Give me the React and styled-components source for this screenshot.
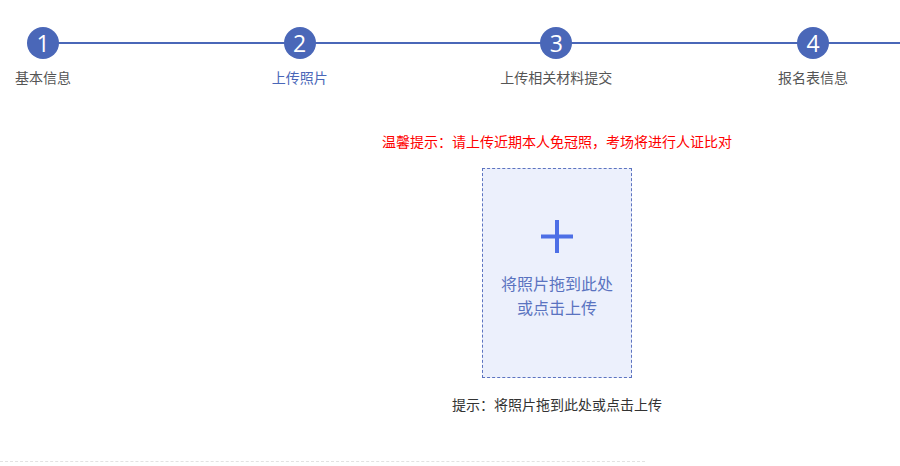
import React from "react";
import styled, { createGlobalStyle } from "styled-components";

const Global = createGlobalStyle`
  html, body { margin: 0; padding: 0; background: #fff; }
  body { font-family: "Noto Sans CJK SC", "Noto Sans", sans-serif; width: 900px; height: 466px; overflow: hidden; }
`;

const Page = styled.div`
  width: 900px;
  padding-top: 27px;
`;

const Steps = styled.div`
  position: relative;
  display: grid;
  grid-template-columns: repeat(4, 86px);
  justify-content: space-between;
  width: 856px;
  &::before {
    content: "";
    position: absolute;
    left: 43px;
    right: -44px;
    top: 15px;
    height: 2px;
    background: #4a67b8;
  }
`;

const Step = styled.div`
  position: relative;
  display: flex;
  flex-direction: column;
  align-items: center;
`;

const Circle = styled.div`
  width: 32px;
  height: 32px;
  border-radius: 50%;
  background: #4a67b8;
  color: #fff;
  display: flex;
  align-items: center;
  justify-content: center;
  font-family: "Open Sans", "Noto Sans", sans-serif;
  font-size: 23px;
  line-height: 1;
`;

const StepLabel = styled.div`
  margin-top: 8px;
  font-size: 14px;
  line-height: 20px;
  white-space: nowrap;
  color: ${(p) => (p.$active ? "#4a67b8" : "#555")};
`;

const Content = styled.div`
  margin-left: 214px;
  width: 686px;
  display: flex;
  flex-direction: column;
  align-items: center;
  padding-top: 44px;
`;

const Notice = styled.div`
  color: #ff0000;
  font-size: 14px;
  line-height: 20px;
`;

const UploadBox = styled.div`
  box-sizing: border-box;
  margin-top: 17px;
  width: 150px;
  height: 210px;
  background: #ecf0fc;
  border: 1px dashed #5d74c0;
  display: flex;
  flex-direction: column;
  align-items: center;
  padding-top: 51px;
`;

const UploadText = styled.div`
  margin-top: 18px;
  color: #5a73c0;
  font-size: 16px;
  line-height: 24px;
  text-align: center;
`;

const Hint = styled.div`
  margin-top: 16px;
  font-size: 14px;
  line-height: 20px;
  color: #333;
`;

const Divider = styled.div`
  margin-top: 47px;
  width: 645px;
  border-top: 1px dashed #e2e2e2;
`;

const PlusIcon = () => (
  <svg width="32" height="33" viewBox="0 0 32 33">
    <rect x="14" y="0" width="4" height="33" fill="#4d6fe6" />
    <rect x="0" y="14.5" width="32" height="4" fill="#4d6fe6" />
  </svg>
);

const steps = ["基本信息", "上传照片", "上传相关材料提交", "报名表信息"];

export default function App() {
  return (
    <Page>
      <Global />
      <Steps>
        {steps.map((s, i) => (
          <Step key={s}>
            <Circle>{i + 1}</Circle>
            <StepLabel $active={i === 1}>{s}</StepLabel>
          </Step>
        ))}
      </Steps>
      <Content>
        <Notice>温馨提示：请上传近期本人免冠照，考场将进行人证比对</Notice>
        <UploadBox>
          <PlusIcon />
          <UploadText>
            将照片拖到此处
            <br />
            或点击上传
          </UploadText>
        </UploadBox>
        <Hint>提示：将照片拖到此处或点击上传</Hint>
      </Content>
      <Divider />
    </Page>
  );
}
